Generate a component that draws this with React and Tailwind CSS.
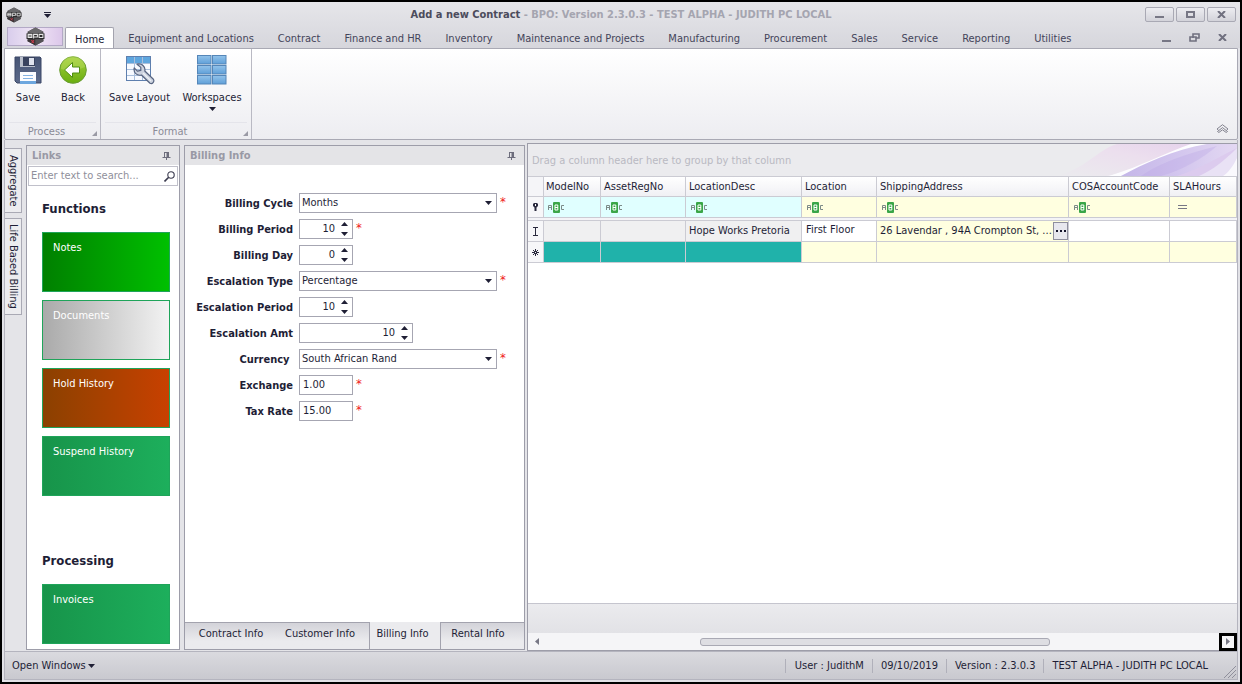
import React from "react";

const menu = [
  "Equipment and Locations",
  "Contract",
  "Finance and HR",
  "Inventory",
  "Maintenance and Projects",
  "Manufacturing",
  "Procurement",
  "Sales",
  "Service",
  "Reporting",
  "Utilities",
];

function HexLogo({ className }) {
  return (
    <svg viewBox="0 0 18 18" className={className} aria-hidden="true">
      <path d="M9 0.5 L16.5 4.5 V13.5 L9 17.5 L1.5 13.5 V4.5 Z" fill="#4a484b" />
      <path d="M9 0.5 L16.5 4.5 L9 7 L1.5 4.5 Z" fill="#6a696c" />
      <path d="M1.5 12 L9 11 V17.5 L1.5 13.5 Z" fill="#3a3537" />
      <path d="M9 11 L16.5 12 V13.5 L9 17.5 Z" fill="#545256" />
      <rect x="0.5" y="6" width="17" height="5.4" fill="#2b2a2c" />
      <g fill="none" stroke="#e4e4e4" strokeWidth="1">
        <path d="M2 7 H5.6 V10 H2 Z M2 8.5 H5.6" />
        <path d="M7.2 10.9 V7 H10.8 V9.4 H7.2" />
        <path d="M12.4 7 H16 V10 H12.4 Z" />
      </g>
      <path d="M5 12.5 L7.5 15 M7.5 12.5 L5.4 15" stroke="#c43b4c" strokeWidth="1" />
    </svg>
  );
}

function Down({ className = "" }) {
  return (
    <svg viewBox="0 0 7 4" className={"h-1 w-[7px] " + className} aria-hidden="true">
      <path d="M0 0 H7 L3.5 4 Z" fill="#1f1f35" />
    </svg>
  );
}

function Up() {
  return (
    <svg viewBox="0 0 7 4" className="h-1 w-[7px]" aria-hidden="true">
      <path d="M0 4 H7 L3.5 0 Z" fill="#1f1f35" />
    </svg>
  );
}

function Pin() {
  return (
    <svg viewBox="0 0 9 9" className="h-[9px] w-[9px]" aria-hidden="true">
      <path d="M2.5 1.5 H6.5 M2.5 1 V6.5 M0.5 6.5 H8.5 M4.5 6.5 V9" stroke="#6d6d7c" fill="none" />
      <rect x="4.5" y="1" width="2.5" height="5.5" fill="#6d6d7c" />
    </svg>
  );
}

function SaveIcon() {
  return (
    <svg viewBox="0 0 28 28" className="h-7 w-7" aria-hidden="true">
      <defs>
        <linearGradient id="disk" x1="0" y1="0" x2="0" y2="1">
          <stop offset="0" stopColor="#465474" />
          <stop offset="1" stopColor="#5c6a8b" />
        </linearGradient>
      </defs>
      <path d="M1 1 H26 L27 2 V27 H3 L1 25 Z" fill="url(#disk)" stroke="#3a4766" />
      <rect x="6" y="1" width="15" height="10" fill="#b9bfcc" />
      <rect x="9" y="1" width="12" height="9" fill="#39435f" />
      <rect x="15" y="2" width="5" height="7" fill="#dfe3ee" />
      <rect x="6" y="16" width="16" height="12" fill="#fbfcff" />
      <rect x="6" y="25" width="16" height="3" fill="#6da7df" />
      <path d="M9 19.5 H19 M9 22.5 H19" stroke="#84b2e2" />
    </svg>
  );
}

function BackIcon() {
  return (
    <svg viewBox="0 0 28 28" className="h-7 w-7" aria-hidden="true">
      <defs>
        <linearGradient id="ball" x1="0" y1="0" x2="0" y2="1">
          <stop offset="0" stopColor="#a4cf3c" />
          <stop offset="1" stopColor="#6aae10" />
        </linearGradient>
      </defs>
      <circle cx="14" cy="14" r="13.3" fill="url(#ball)" stroke="#6a9c35" />
      <path d="M2 13 A12 12 0 0 1 26 11 Q14 17 2 13 Z" fill="#c6e46f" opacity="0.35" />
      <path d="M5.5 14 L13.5 6.5 V11 H20.5 V17 H13.5 V21.5 Z" fill="#fff" stroke="#4f8d10" strokeLinejoin="round" />
    </svg>
  );
}

function LayoutIcon() {
  return (
    <svg viewBox="0 0 30 30" className="h-[30px] w-[30px]" aria-hidden="true">
      <rect x="1.5" y="1.5" width="24" height="24" fill="#f7faff" stroke="#5e7fae" />
      <rect x="2" y="2" width="23" height="6" fill="#5ea6de" />
      <path d="M9.5 2 V25 M17.5 2 V25 M2 8.5 H25 M2 14.5 H25 M2 20.5 H25" stroke="#a9bfdc" />
      <path
        d="M12 9.2 C16.5 8 20.8 11.4 19.8 16 L28.4 24.2 C29.8 26.6 27.4 29.4 25 28.2 L16.4 20 C12 21.2 8.2 17.6 9.2 12.8 L12.4 16.2 L15.8 15.4 L15.8 12.4 Z"
        fill="#ccd2de"
        stroke="#56637f"
        strokeWidth="1.2"
        strokeLinejoin="round"
      />
      <path d="M18 18 L26 26" stroke="#eef1f6" strokeWidth="1.2" />
    </svg>
  );
}

function WorkspacesIcon() {
  const xs = [0.5, 15.5];
  const ys = [0.5, 10.5, 20.5];
  return (
    <svg viewBox="0 0 30 30" className="h-[30px] w-[30px]" aria-hidden="true">
      <defs>
        <linearGradient id="pane" x1="0" y1="0" x2="0" y2="1">
          <stop offset="0" stopColor="#93c3ea" />
          <stop offset="1" stopColor="#5f9fd8" />
        </linearGradient>
      </defs>
      {ys.map((y) =>
        xs.map((x) => (
          <rect key={x + "-" + y} x={x} y={y} width="13.5" height="8.5" fill="url(#pane)" stroke="#5586b8" />
        ))
      )}
    </svg>
  );
}

function Abc() {
  return (
    <svg viewBox="0 0 16 11" className="block h-[11px] w-4" aria-hidden="true">
      <path d="M0.5 8 V3.5 H3.5 V8 M0.5 5.5 H3.5" stroke="#7c8a88" fill="none" />
      <rect x="5" y="0" width="7" height="11" rx="1" fill="#3aa648" />
      <path d="M7 3 H9.8 V8 H7 Z M7 5.5 H10" stroke="#fff" fill="none" />
      <path d="M16 3.5 H13.5 V7.5 H16" stroke="#7c8a88" fill="none" />
    </svg>
  );
}

function RibbonGroup({ title, children, className = "" }) {
  return (
    <section className={"flex flex-col border-r border-[#b9b9c3] " + className}>
      <div className="flex flex-1 items-start justify-center pr-1 pt-[3px]">{children}</div>
      <div className="relative mx-1 flex h-[17px] items-center justify-center border-t border-[#e4e4ea] pr-3 pt-px text-[#8b8b97]">
        {title}
        <svg viewBox="0 0 5 5" className="absolute -right-px bottom-[3px] h-[5px] w-[5px]" aria-hidden="true">
          <path d="M5 0 V5 H0 Z" fill="#9a9aa5" />
        </svg>
      </div>
    </section>
  );
}

function RibbonButton({ icon, label, drop, className }) {
  return (
    <button className={"flex flex-col items-center whitespace-nowrap " + className}>
      <span className="flex h-9 items-center justify-center">{icon}</span>
      <span className="mt-[2px] leading-4">{label}</span>
      {drop && <Down className="mt-px" />}
    </button>
  );
}

function Required() {
  return <span className="ml-[3px] self-start text-[13px] leading-[18px] text-[#f02020]">*</span>;
}

function Field({ id, label, kind, value, required, width }) {
  const box = "flex h-5 border border-[#a6a6b2] bg-white " + width;
  return (
    <div className="flex h-5 items-center">
      <label htmlFor={id} className="w-[108px] shrink-0 pt-px text-right font-bold leading-5">
        {label}
      </label>
      <div className="ml-[6px] flex h-5">
        {kind === "select" && (
          <div className={"relative " + box}>
            <select id={id} defaultValue={value} className="w-full appearance-none bg-transparent pl-[2px] outline-none">
              <option>{value}</option>
            </select>
            <Down className="pointer-events-none absolute right-1 top-[7px]" />
          </div>
        )}
        {kind === "spin" && (
          <div className={box}>
            <input id={id} defaultValue={value} inputMode="numeric" className="min-w-0 flex-1 bg-transparent text-right outline-none" />
            <div className="flex w-[17px] flex-col items-center justify-between py-px pl-px">
              <button type="button" aria-label={label + " up"} className="flex h-[6px] items-center">
                <Up />
              </button>
              <button type="button" aria-label={label + " down"} className="flex h-[6px] items-center">
                <Down />
              </button>
            </div>
          </div>
        )}
        {kind === "text" && (
          <div className={box}>
            <input id={id} defaultValue={value} className="min-w-0 flex-1 bg-transparent pl-[3px] outline-none" />
          </div>
        )}
        {required && <Required />}
      </div>
    </div>
  );
}

const fields = [
  { id: "cycle", label: "Billing Cycle", kind: "select", value: "Months", required: true, width: "w-[198px]" },
  { id: "period", label: "Billing Period", kind: "spin", value: "10", required: true, width: "w-[54px]" },
  { id: "day", label: "Billing Day", kind: "spin", value: "0", width: "w-[54px]" },
  { id: "etype", label: "Escalation Type", kind: "select", value: "Percentage", required: true, width: "w-[198px]" },
  { id: "eperiod", label: "Escalation Period", kind: "spin", value: "10", width: "w-[54px]" },
  { id: "eamt", label: "Escalation Amt", kind: "spin", value: "10", width: "w-[114px]" },
  { id: "currency", label: "Currency\u00a0", kind: "select", value: "South African Rand", required: true, width: "w-[198px]" },
  { id: "exchange", label: "Exchange", kind: "text", value: "1.00", required: true, width: "w-[54px]" },
  { id: "tax", label: "Tax Rate", kind: "text", value: "15.00", required: true, width: "w-[54px]" },
];

function PanelHeader({ title }) {
  return (
    <header className="flex h-[19px] shrink-0 items-center justify-between bg-[#e4e4e7] pl-[5px] pr-2">
      <h2 className="pt-px font-bold text-[#9999a5]">{title}</h2>
      <button aria-label={"Pin " + title}>
        <Pin />
      </button>
    </header>
  );
}

function Tile({ label, className }) {
  return (
    <button className={"flex h-[60px] w-full shrink-0 items-start border border-[#1fa45a] bg-linear-to-r px-[10px] pt-2 text-left text-white " + className}>
      {label}
    </button>
  );
}

function WinButton({ label, children }) {
  return (
    <button aria-label={label} className="flex h-[15px] w-[29px] items-center justify-center rounded-[2px] border border-[#a9a9b4] bg-linear-to-b from-[#ededf1] to-[#d3d3da]">
      {children}
    </button>
  );
}

function Swirl() {
  return (
    <svg viewBox="0 0 180 32" preserveAspectRatio="none" className="h-8 w-[180px]" aria-hidden="true">
      <defs>
        <linearGradient id="pinkWave" x1="0" y1="1" x2="1" y2="0">
          <stop offset="0" stopColor="#ebebee" />
          <stop offset="0.6" stopColor="#ecdfee" />
          <stop offset="1" stopColor="#e6d3ec" />
        </linearGradient>
        <linearGradient id="violetWave" x1="0" y1="0" x2="1" y2="0">
          <stop offset="0" stopColor="#c4b6e8" />
          <stop offset="0.5" stopColor="#d3c6ee" />
          <stop offset="1" stopColor="#e3d8f2" />
        </linearGradient>
      </defs>
      <path d="M0 32 C30 24 40 6 60 0 H138 C100 14 80 24 62 32 Z" fill="url(#pinkWave)" />
      <path d="M50 32 C85 26 112 8 150 0 H180 V32 Z" fill="#f3eff8" />
      <path d="M52 32 C85 22 110 8 134 0 L150 0 C120 10 90 22 64 32 Z" fill="#fdfdff" />
      <path d="M64 32 C86 20 116 6 150 0 H180 V6 C165 22 150 26 134 32 Z" fill="url(#violetWave)" />
      <path d="M84 32 C104 18 130 10 160 2 C146 14 126 26 104 32 Z" fill="#b9a6e6" opacity="0.35" />
      <path d="M120 32 C140 26 160 14 180 4 V12 C168 22 156 28 148 32 Z" fill="#dccbee" />
      <path d="M142 32 C156 26 168 16 180 4 V22 L176 32 Z" fill="#e9e2f5" />
      <path d="M166 32 C172 28 176 22 180 14 V32 Z" fill="#faf9fd" />
    </svg>
  );
}

const headers = ["ModelNo", "AssetRegNo", "LocationDesc", "Location", "ShippingAddress", "COSAccountCode", "SLAHours"];
const cell = "border-r border-b border-[#cbcbd3] p-0 ";

function Grid() {
  return (
    <table className="w-full table-fixed border-separate border-spacing-0 text-left">
      <colgroup>
        <col className="w-4" />
        <col className="w-[57px]" />
        <col className="w-[85px]" />
        <col className="w-[116px]" />
        <col className="w-[75px]" />
        <col className="w-[192px]" />
        <col className="w-[101px]" />
        <col />
      </colgroup>
      <thead>
        <tr className="h-5">
          <th className={cell + "bg-[#f5f5f8]"} aria-label="Row state" />
          {headers.map((h, i) => (
            <th key={h} className={cell + "bg-linear-to-b from-white to-[#f0f0f4] font-normal " + (i === 0 ? "pl-[2px]" : "pl-[3px]")}>
              {h}
            </th>
          ))}
        </tr>
      </thead>
      <tbody>
        <tr className="h-[21px]">
          <td className={cell + "bg-[#f7f7f9]"}>
            <svg viewBox="0 0 5 8" className="mx-auto h-2 w-[5px]" aria-hidden="true">
              <path d="M0 1 L1 0 H4 L5 1 V3 L3.5 4.5 V8 H1.5 V4.5 L0 3 Z" fill="#2a2a3e" />
              <rect x="2" y="1" width="1" height="2" fill="#fff" />
            </svg>
          </td>
          {headers.map((h, i) => (
            <td key={h} className={cell + (i < 3 ? "bg-[#e0ffff] " : "bg-[#ffffe0] ") + (i === 0 ? "pl-1" : "pl-[5px]")}>
              {i < 6 ? (
                <Abc />
              ) : (
                <svg viewBox="0 0 9 5" className="ml-[3px] h-[5px] w-[9px]" aria-hidden="true">
                  <path d="M0 0.5 H9 M0 3.5 H9" stroke="#777785" />
                </svg>
              )}
            </td>
          ))}
        </tr>
        <tr className="h-[3px]" aria-hidden="true">
          <td colSpan={8} className="border-b border-[#cbcbd3] bg-[#f4f4f7] p-0" />
        </tr>
        <tr className="h-[21px]">
          <td className={cell + "bg-[#f7f7f9]"}>
            <svg viewBox="0 0 5 9" className="mx-auto h-[9px] w-[5px]" aria-hidden="true">
              <path d="M0 0.5 H5 M0 8.5 H5 M2.5 0 V9" stroke="#2a2a3e" fill="none" />
            </svg>
          </td>
          <td className={cell + "bg-[#f0f0f1]"} />
          <td className={cell + "bg-[#f0f0f1]"} />
          <td className={cell + "whitespace-nowrap bg-[#f0f0f1] pl-[3px]"}>Hope Works Pretoria</td>
          <td className={cell + "bg-white pb-[3px] pl-1"}>First Floor</td>
          <td className={cell + "bg-[#ffffe0] pl-[3px]"}>
            <div className="flex items-center justify-between">
              <span className="overflow-hidden whitespace-nowrap">26 Lavendar , 94A Crompton St, ...</span>
              <button aria-label="Edit address" className="flex h-[18px] w-[15px] shrink-0 items-center justify-center gap-px border border-[#8f8f9d] bg-[#e8e8ee]">
                <i className="h-[2px] w-[2px] bg-[#14142a]" />
                <i className="mx-px h-[2px] w-[2px] bg-[#14142a]" />
                <i className="h-[2px] w-[2px] bg-[#14142a]" />
              </button>
            </div>
          </td>
          <td className={cell + "bg-white"} />
          <td className={cell + "bg-white"} />
        </tr>
        <tr className="h-[21px]">
          <td className={cell + "bg-[#f7f7f9]"}>
            <svg viewBox="0 0 7 7" className="mx-auto h-[7px] w-[7px]" aria-hidden="true">
              <path d="M3.5 0 V7 M0 3.5 H7 M1 1 L6 6 M6 1 L1 6" stroke="#2a2a3e" />
              <rect x="3" y="3" width="1" height="1" fill="#fff" />
            </svg>
          </td>
          {headers.map((h, i) => (
            <td key={h} className={cell + (i < 3 ? "bg-[#20b2aa]" : "bg-[#ffffe0]")} />
          ))}
        </tr>
      </tbody>
    </table>
  );
}

const plainTab = "bg-linear-to-b from-[#d3d3d9] to-[#ebebee] to-70% border-t border-[#a3a3ae] whitespace-nowrap pb-1";

export default function App() {
  return (
    <div className="flex min-h-screen flex-col border-2 border-black bg-[#e2e2e7] font-['DejaVu_Sans_Condensed','DejaVu_Sans',sans-serif] text-[11px] leading-[14px] text-[#1e1e36]">
      <div className="bg-linear-to-b from-[#e6e6ea] to-[#d6d6dc]">
        <div className="grid h-[25px] grid-cols-[1fr_auto_1fr] items-center px-[4px]">
          <div className="flex items-center">
            <HexLogo className="h-4 w-4" />
            <button aria-label="Customize quick access" className="ml-[22px] flex flex-col items-center gap-px">
              <span className="h-px w-[7px] bg-[#1f1f35]" />
              <Down />
            </button>
          </div>
          <h1 className="whitespace-nowrap font-bold text-[#a5a5b0]">
            <span className="text-[#4c4c5c]">Add a new Contract</span> - BPO: Version 2.3.0.3 - TEST ALPHA - JUDITH PC LOCAL
          </h1>
          <div className="flex justify-end gap-[2px]">
            <WinButton label="Minimize">
              <span className="mt-1 h-[2px] w-[9px] bg-[#777785]" />
            </WinButton>
            <WinButton label="Maximize">
              <span className="h-[7px] w-[9px] border-2 border-[#777785]" />
            </WinButton>
            <WinButton label="Close">
              <svg viewBox="0 0 9 7" className="h-[7px] w-[9px]" aria-hidden="true">
                <path d="M1 0 L8 7 M8 0 L1 7" stroke="#70707f" strokeWidth="2" />
              </svg>
            </WinButton>
          </div>
        </div>
        <nav className="flex h-[21px] items-end pl-[5px] pr-[13px]">
          <button aria-label="Application menu" className="mb-[2px] flex h-[19px] w-14 items-center justify-center border border-[#b3a9c6] bg-linear-to-r from-[#d9cdec] via-[#f0e6f5] to-[#dcc7ea]">
            <HexLogo className="h-[19px] w-[19px]" />
          </button>
          <a href="#home" className="ml-[2px] flex h-[21px] items-center rounded-t-[2px] border border-b-0 border-[#a3a3ae] bg-white px-[9px] pt-[3px]">
            Home
          </a>
          <div className="ml-[2px] flex h-[21px] items-center pt-[3px]">
            {menu.map((m) => (
              <a key={m} href="#menu" className="whitespace-nowrap px-3 text-[#44445a]">
                {m}
              </a>
            ))}
          </div>
          <div className="mb-[6px] ml-auto flex items-center gap-[18px]">
            <button aria-label="Minimize document" className="flex h-[9px] items-end">
              <span className="h-[2px] w-[9px] bg-[#777785]" />
            </button>
            <button aria-label="Restore document">
              <svg viewBox="0 0 11 9" className="h-[9px] w-[11px]" aria-hidden="true">
                <path d="M4 5 V1 H10 V5 H7 M1 4 H7 V8 H1 Z" stroke="#70707f" strokeWidth="1.6" fill="none" />
              </svg>
            </button>
            <button aria-label="Close document">
              <svg viewBox="0 0 9 7" className="h-[7px] w-[9px]" aria-hidden="true">
                <path d="M1 0 L8 7 M8 0 L1 7" stroke="#70707f" strokeWidth="2" />
              </svg>
            </button>
          </div>
        </nav>
      </div>

      <div className="mx-[2px] flex h-[92px] rounded-b-[2px] border border-[#a9a9b4] bg-linear-to-b from-white to-[#ededf1]">
        <RibbonGroup title="Process" className="w-24">
          <RibbonButton icon={<SaveIcon />} label="Save" className="w-[45px]" />
          <RibbonButton icon={<BackIcon />} label="Back" className="w-[45px]" />
        </RibbonGroup>
        <RibbonGroup title="Format" className="w-[151px]">
          <RibbonButton icon={<LayoutIcon />} label="Save Layout" className="w-[76px]" />
          <RibbonButton icon={<WorkspacesIcon />} label="Workspaces" drop className="w-[69px]" />
        </RibbonGroup>
        <button aria-label="Collapse ribbon" className="mb-[6px] ml-auto mr-2 self-end">
          <svg viewBox="0 0 13 9" className="h-[9px] w-[13px]" aria-hidden="true">
            <path
              d="M1 5 L6.5 0.7 L12 5 L10.5 6.2 M1 5 L2.5 6.2 M1.5 7.5 L6.5 3.6 L11.5 7.5 L10.2 8.5 L6.5 5.8 L2.8 8.5 Z"
              stroke="#777785"
              strokeWidth="0.9"
              fill="none"
            />
          </svg>
        </button>
      </div>

      <main className="mx-[2px] flex flex-1 border-x border-[#b4b4be] bg-[#e4e4e8] pt-[3px]">
        <div className="mt-[5px] flex w-[17px] shrink-0 flex-col gap-[5px]">
          <button className="flex h-[65px] w-[17px] items-center justify-center border border-l-0 border-[#a9a9b4] bg-[#ececef] [writing-mode:vertical-rl]">Aggregate</button>
          <button className="flex h-[97px] w-[17px] items-center justify-center whitespace-nowrap border border-l-0 border-[#a9a9b4] bg-[#ececef] [writing-mode:vertical-rl]">
            Life Based Billing
          </button>
        </div>

        <aside className="mb-px ml-1 mt-[2px] flex w-[154px] shrink-0 flex-col border border-[#9d9da9] bg-white">
          <PanelHeader title="Links" />
          <div className="mx-px mt-px flex h-5 items-center border border-[#c0c0ca]">
            <input aria-label="Search" placeholder="Enter text to search..." className="min-w-0 flex-1 pl-[2px] outline-none placeholder:text-[#8f8f9b]" />
            <svg viewBox="0 0 11 11" className="mr-[2px] h-[11px] w-[11px] shrink-0" aria-hidden="true">
              <circle cx="7" cy="4" r="3.2" stroke="#3a3a4e" strokeWidth="1.1" fill="none" />
              <path d="M4.7 6.3 L0.5 10.5" stroke="#3a3a4e" strokeWidth="1.6" />
            </svg>
          </div>
          <div className="flex flex-col pl-[15px] pr-[9px]">
            <h3 className="mt-[15px] text-[13px] font-bold leading-4">Functions</h3>
            <div className="mt-[15px] flex flex-col gap-2">
              <Tile label="Notes" className="from-[#008000] to-[#00c000]" />
              <Tile label="Documents" className="from-[#aaaaaa] to-[#f3f3f3]" />
              <Tile label="Hold History" className="from-[#8b4000] to-[#c84000]" />
              <Tile label="Suspend History" className="from-[#17944a] to-[#1daf5c]" />
            </div>
            <h3 className="mt-[57px] text-[13px] font-bold leading-4">Processing</h3>
            <div className="mt-[15px]">
              <Tile label="Invoices" className="from-[#17944a] to-[#1daf5c]" />
            </div>
          </div>
        </aside>

        <section className="mb-px ml-1 mt-[2px] flex w-[341px] shrink-0 flex-col border border-[#9d9da9] bg-white">
          <PanelHeader title="Billing Info" />
          <form className="mt-7 flex flex-1 flex-col gap-[6px]">
            {fields.map((f) => (
              <Field key={f.id} {...f} />
            ))}
          </form>
          <div className="flex h-[27px] bg-[#ebebee]">
            <button className={plainTab + " w-[92px]"}>Contract Info</button>
            <button className={plainTab + " w-[93px] border-r pr-[6px]"}>Customer Info</button>
            <button className="w-[70px] whitespace-nowrap bg-[#ebebee] pb-[3px] pr-[5px]">Billing Info</button>
            <button className={plainTab + " flex-1 border-l pr-[9px]"}>Rental Info</button>
          </div>
        </section>

        <section className="ml-[2px] flex min-w-0 flex-1 flex-col border border-r-0 border-[#9d9da9] bg-white">
          <div className="flex h-8 shrink-0 items-center justify-between overflow-hidden bg-[#ebebee] pl-1">
            <span className="whitespace-nowrap pt-[2px] text-[#b9b9c2]">Drag a column header here to group by that column</span>
            <Swirl />
          </div>
          <div className="border-t border-[#cbcbd3]">
            <Grid />
          </div>
          <div className="flex-1" />
          <div className="h-[30px] shrink-0 border-t border-[#c5c5ce] bg-linear-to-b from-[#ebebee] to-[#e2e2e6]" />
          <div className="flex h-[17px] shrink-0 items-center bg-[#f5f5f7]">
            <button aria-label="Scroll left" className="flex h-[17px] w-[17px] items-center justify-center">
              <svg viewBox="0 0 4 7" className="h-[7px] w-1" aria-hidden="true">
                <path d="M4 0 V7 L0 3.5 Z" fill="#777785" />
              </svg>
            </button>
            <div className="flex flex-1">
              <span className="w-[23%]" />
              <span className="h-2 w-[52%] rounded-[3px] border border-[#a9a9b4] bg-[#dedee3]" />
            </div>
            <button aria-label="Scroll right" className="flex h-[18px] w-[18px] items-center justify-center border-[3px] border-black bg-[#f5f5f7]">
              <svg viewBox="0 0 4 7" className="h-[7px] w-1" aria-hidden="true">
                <path d="M0 0 V7 L4 3.5 Z" fill="#777785" />
              </svg>
            </button>
          </div>
        </section>
      </main>

      <footer className="mx-[2px] mb-[2px] flex h-[29px] shrink-0 items-center border border-[#b4b4be] bg-linear-to-b from-[#dadadf] to-[#c9c9cf] pl-[7px] pr-px">
        <button className="flex items-center gap-[2px]">
          Open Windows <Down />
        </button>
        <div className="ml-auto flex items-center whitespace-nowrap">
          <span className="border-l border-[#b0b0ba] pl-[9px] pr-2">User : JudithM</span>
          <span className="border-l border-[#b0b0ba] px-2">09/10/2019</span>
          <span className="border-l border-[#b0b0ba] px-2">Version : 2.3.0.3</span>
          <span className="border-l border-[#b0b0ba] px-2">TEST ALPHA - JUDITH PC LOCAL</span>
        </div>
        <svg viewBox="0 0 12 12" className="ml-2 mb-px h-3 w-3 self-end" aria-hidden="true">
          <path d="M0 12 L12 0 M4 12 L12 4 M8 12 L12 8" stroke="#8f8f9b" />
        </svg>
      </footer>
    </div>
  );
}
